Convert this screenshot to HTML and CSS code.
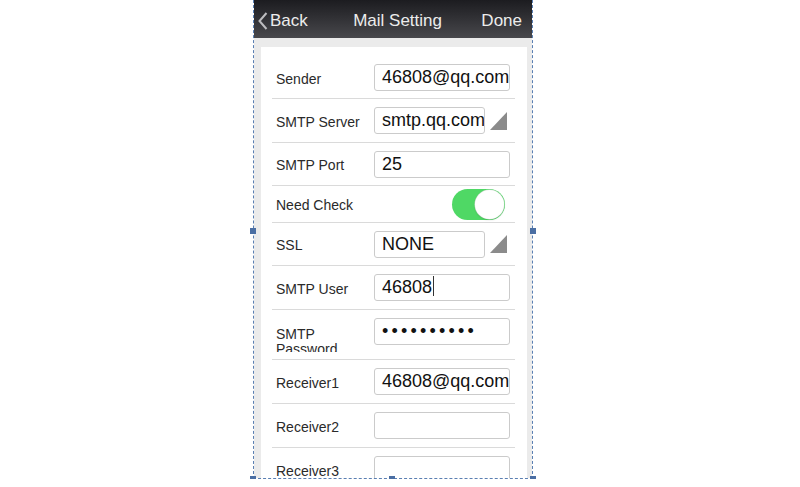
FILE: index.html
```html
<!DOCTYPE html>
<html>
<head>
<meta charset="utf-8">
<link rel="stylesheet" href="styles.css">
</head>
<body>
<div class="wrap">
  <div class="frame">
    <div class="navbar">
      <div class="nav-back">
        <svg class="chev" width="10" height="18" viewBox="0 0 10 18"><path d="M8.5 1 L1.5 9 L8.5 17" fill="none" stroke="#bdbdc0" stroke-width="2"/></svg>
        <span>Back</span>
      </div>
      <div class="nav-title">Mail Setting</div>
      <div class="nav-done">Done</div>
    </div>
    <div class="screen">
      <div class="card">
        <div class="row h42"><div class="label">Sender</div><div class="field">46808@qq.com</div></div>
        <div class="row h44"><div class="label">SMTP Server</div><div class="field short">smtp.qq.com</div><svg class="tri" width="18" height="18" viewBox="0 0 18 18"><path d="M17 0 L17 18 L0 18 Z" fill="#8b8b8b"/></svg></div>
        <div class="row h43"><div class="label">SMTP Port</div><div class="field">25</div></div>
        <div class="row h37"><div class="label">Need Check</div><div class="toggle"><div class="knob"></div></div></div>
        <div class="row h43"><div class="label">SSL</div><div class="field short">NONE</div><svg class="tri" width="18" height="18" viewBox="0 0 18 18"><path d="M17 0 L17 18 L0 18 Z" fill="#8b8b8b"/></svg></div>
        <div class="row h44"><div class="label">SMTP User</div><div class="field">46808<span class="caret"></span></div></div>
        <div class="row h50 top"><div class="label two">SMTP Password</div><div class="field dots">••••••••••</div></div>
        <div class="row h44"><div class="label">Receiver1</div><div class="field">46808@qq.com</div></div>
        <div class="row h44"><div class="label">Receiver2</div><div class="field"></div></div>
        <div class="row h44"><div class="label">Receiver3</div><div class="field"></div></div>
      </div>
    </div>
  </div>
  <div class="handle hl"></div>
  <div class="handle hr"></div>
  <div class="handle bl"></div>
  <div class="handle bm"></div>
  <div class="handle br"></div>
</div>
</body>
</html>
```

FILE: styles.css
```css
html, body {
  margin: 0;
  padding: 0;
  background: #ffffff;
  font-family: "Liberation Sans", Arial, sans-serif;
}
.wrap {
  position: relative;
  margin-left: 253px;
  width: 280px;
  height: 479px;
}
.frame {
  box-sizing: border-box;
  width: 280px;
  height: 479px;
  border-left: 1px dashed #5a7fb2;
  border-right: 1px dashed #5a7fb2;
  border-bottom: 1px dashed #5a7fb2;
  overflow: hidden;
  display: flex;
  flex-direction: column;
}
.navbar {
  height: 38px;
  flex: none;
  background: linear-gradient(#1c1c20, #48484c);
  color: #ececec;
  font-size: 17px;
  display: flex;
  align-items: center;
  position: relative;
  padding: 4px 10px 0 4px;
  box-sizing: border-box;
}
.nav-back {
  display: flex;
  align-items: center;
  gap: 2px;
}
.chev { display: block; margin-top: -1px; }
.nav-title {
  flex: 1;
  text-align: center;
  padding-left: 6px;
}
.screen {
  flex: 1;
  background: #ebebeb;
  padding: 9px 5px 0 7px;
  display: flex;
  flex-direction: column;
}
.card {
  flex: 1;
  background: #ffffff;
  padding: 10px 12px 0 11px;
}
.row {
  box-sizing: border-box;
  display: flex;
  align-items: center;
  border-bottom: 1px solid #dadada;
  padding-left: 4px;
}
.h42 { height: 42px; }
.h43 { height: 43px; }
.h44 { height: 44px; }
.h37 { height: 37px; }
.h50 { height: 50px; }
.row.top { align-items: flex-start; padding-top: 8px; }
.label {
  width: 98px;
  font-size: 14px;
  color: #2a2a2a;
  flex: none;
  padding-top: 2px;
}
.label.two {
  line-height: 15px;
  height: 25px;
  overflow: hidden;
  padding-top: 9px;
  width: 80px;
  margin-right: 18px;
}
.field {
  box-sizing: border-box;
  width: 136px;
  height: 27px;
  border: 1px solid #cbcbcb;
  border-radius: 3px;
  background: #fff;
  font-size: 18px;
  color: #111;
  padding-left: 7px;
  line-height: 25px;
  white-space: nowrap;
  overflow: hidden;
  flex: none;
}
.field.short { width: 111px; }
.field.dots { letter-spacing: 3.2px; font-size: 18px; }
.caret {
  display: inline-block;
  width: 1px;
  height: 20px;
  background: #333;
  vertical-align: -3px;
  margin-left: 1px;
}
.tri { margin-left: 5px; display: block; }
.toggle {
  margin-left: 78px;
  width: 53px;
  height: 31px;
  border-radius: 16px;
  background: #4fd865;
  position: relative;
  box-sizing: border-box;
}
.knob {
  position: absolute;
  right: 1px;
  top: 1px;
  width: 29px;
  height: 29px;
  border-radius: 50%;
  background: #fff;
  box-shadow: 0 0 0 0.5px #c9d9c9, 0 1px 2px rgba(0,0,0,0.15);
}
.handle {
  position: absolute;
  width: 6px;
  height: 6px;
  background: #4a6ea3;
}
.hl { left: -3px; top: 228px; }
.hr { right: -3px; top: 228px; }
.bl { left: -3px; bottom: -3px; }
.bm { left: 136px; bottom: -3px; }
.br { right: -3px; bottom: -3px; }
```
